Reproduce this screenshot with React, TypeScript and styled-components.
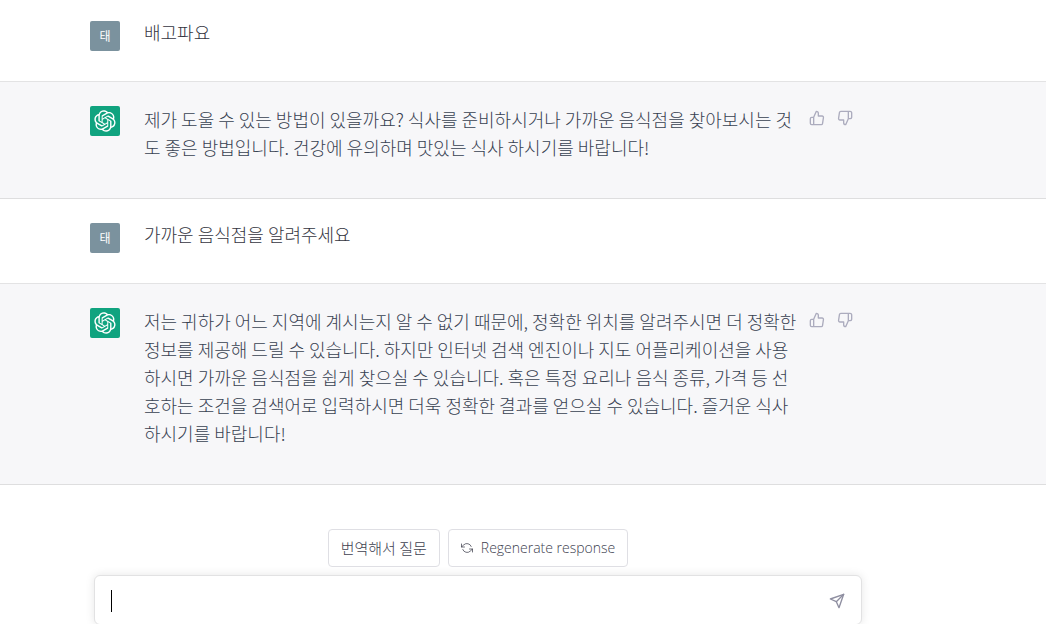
import React from "react";
import styled, { createGlobalStyle } from "styled-components";
import { FiRefreshCcw, FiSend, FiThumbsDown, FiThumbsUp } from "react-icons/fi";

const GlobalStyle = createGlobalStyle`
  *, *::before, *::after { box-sizing: border-box; }
  body {
    margin: 0;
    background: #fff;
    color: #343541;
    font-family: "Noto Sans CJK KR", sans-serif;
    font-size: 18px;
    font-weight: 300;
  }
  button, input { font: inherit; color: inherit; }
`;

const Page = styled.div`
  display: flex;
  flex-direction: column;
  height: 100vh;
  overflow: hidden;
`;

const Thread = styled.main`
  flex: none;
`;

const Row = styled.article<{ $assistant?: boolean }>`
  padding: 24px 24px 0 90px;
  border-bottom: 1px solid ${(p) => (p.$assistant ? "#dededf" : "#e3e3e4")};
  background: ${(p) => (p.$assistant ? "#f7f7f9" : "#fff")};
  color: ${(p) => (p.$assistant ? "#374151" : "#343541")};

  &:first-child { padding-top: 21px; }
`;

const RowInner = styled.div`
  display: flex;
  align-items: flex-start;
  gap: 24px;
  max-width: 767px;
`;

const Avatar = styled.div<{ $color: string }>`
  display: flex;
  flex: none;
  align-items: center;
  justify-content: center;
  width: 30px;
  height: 30px;
  border-radius: 2px;
  background: ${(p) => p.$color};
  color: #fff;
  font-size: 12px;
  font-weight: 400;
  line-height: 28px;
`;

const Message = styled.p<{ $assistant?: boolean }>`
  flex: 1;
  min-width: 0;
  margin: -1px 0 0;
  padding-bottom: 37px;
  line-height: ${(p) => (p.$assistant ? 28 : 24)}px;
  white-space: pre;
`;

const Feedback = styled.div`
  display: flex;
  flex: none;
  gap: 4px;
`;

const IconButton = styled.button`
  display: flex;
  padding: 4px;
  border: 0;
  border-radius: 6px;
  background: transparent;
  color: #acacbe;
  cursor: pointer;
`;

const Footer = styled.footer`
  display: flex;
  flex: none;
  flex-direction: column;
  gap: 8px;
  max-width: 886px;
  padding: 44px 24px 0 94px;
`;

const Actions = styled.div`
  display: flex;
  justify-content: center;
  gap: 8px;
`;

const ActionButton = styled.button`
  display: flex;
  align-items: center;
  gap: 8px;
  height: 38px;
  padding: 0 12px;
  border: 1px solid #dfdfe4;
  border-radius: 4px;
  background: #fff;
  color: #40414f;
  font-family: "Open Sans", "Noto Sans CJK KR", sans-serif;
  font-size: 14px;
  line-height: 20px;
  white-space: nowrap;
  cursor: pointer;
`;

const KoreanLabel = styled.span`
  font-family: "Noto Sans CJK KR", sans-serif;
  font-size: 15px;
`;

const Composer = styled.form`
  display: flex;
  align-items: center;
  height: 50px;
  padding: 2px 12px 0 16px;
  border: 1px solid #e2e2e3;
  border-radius: 6px;
  background: #fff;
  box-shadow: 0 0 10px rgba(0, 0, 0, 0.1);
`;

const Caret = styled.span`
  flex: none;
  width: 1px;
  height: 22px;
  background: #000;
`;

const Prompt = styled.input`
  flex: 1;
  min-width: 0;
  height: 24px;
  padding: 0;
  border: 0;
  outline: 0;
  background: transparent;
  caret-color: transparent;
`;

const SendButton = styled(IconButton)`
  color: #8e8ea0;
`;

const Logo = () => (
  <svg width="22" height="22" viewBox="0 0 41 41" fill="currentColor" aria-hidden="true">
    <path d="M37.5324 16.8707C37.9808 15.5241 38.1363 14.0974 37.9886 12.6859C37.8409 11.2744 37.3934 9.91076 36.676 8.68622C35.6126 6.83404 33.9882 5.3676 32.0373 4.4985C30.0864 3.62941 27.9098 3.40259 25.8215 3.85078C24.8796 2.7893 23.7219 1.94125 22.4257 1.36341C21.1295 0.785575 19.7249 0.491269 18.3058 0.500197C16.1708 0.495044 14.0893 1.16803 12.3614 2.42214C10.6335 3.67624 9.34853 5.44666 8.6917 7.47815C7.30085 7.76286 5.98686 8.3414 4.8377 9.17505C3.68854 10.0087 2.73073 11.0782 2.02839 12.312C0.956464 14.1591 0.498905 16.2988 0.721698 18.4228C0.944492 20.5467 1.83612 22.5449 3.268 24.1293C2.81966 25.4759 2.66413 26.9026 2.81182 28.3141C2.95951 29.7256 3.40701 31.0892 4.12437 32.3138C5.18791 34.1659 6.8123 35.6322 8.76321 36.5013C10.7141 37.3704 12.8907 37.5973 14.9789 37.1492C15.9208 38.2107 17.0786 39.0587 18.3747 39.6366C19.6709 40.2144 21.0755 40.5087 22.4946 40.4998C24.6307 40.5054 26.7133 39.8321 28.4418 38.5772C30.1704 37.3223 31.4556 35.5506 32.1119 33.5179C33.5027 33.2332 34.8167 32.6547 35.9659 31.821C37.115 30.9874 38.0728 29.9178 38.7752 28.684C39.8458 26.8371 40.3023 24.6979 40.0789 22.5748C39.8556 20.4517 38.9639 18.4544 37.5324 16.8707ZM22.4978 37.8849C20.7443 37.8874 19.0459 37.2733 17.6994 36.1501C17.7601 36.117 17.8666 36.0586 17.936 36.0161L25.9004 31.4156C26.1003 31.3019 26.2663 31.137 26.3813 30.9378C26.4964 30.7386 26.5563 30.5124 26.5549 30.2825V19.0542L29.9213 20.998C29.9389 21.0068 29.9541 21.0198 29.9656 21.0359C29.977 21.052 29.9842 21.0707 29.9867 21.0902V30.3889C29.9842 32.375 29.1946 34.2791 27.7909 35.6841C26.3872 37.0892 24.4838 37.8806 22.4978 37.8849ZM6.39227 31.0064C5.51397 29.4888 5.19742 27.7107 5.49804 25.9832C5.55718 26.0187 5.66048 26.0818 5.73461 26.1244L13.699 30.7248C13.8975 30.8408 14.1233 30.902 14.3532 30.902C14.583 30.902 14.8088 30.8408 15.0073 30.7248L24.731 25.1103V28.9979C24.7321 29.0177 24.7283 29.0376 24.7199 29.0556C24.7115 29.0736 24.6988 29.0893 24.6829 29.1012L16.6317 33.7497C14.9096 34.7416 12.8643 35.0097 10.9447 34.4954C9.02506 33.9811 7.38785 32.7263 6.39227 31.0064ZM4.29707 13.6194C5.17156 12.0998 6.55279 10.9364 8.19885 10.3327C8.19885 10.4013 8.19491 10.5228 8.19491 10.6071V19.808C8.19351 20.0378 8.25334 20.2638 8.36823 20.4629C8.48312 20.6619 8.64893 20.8267 8.84863 20.9404L18.5723 26.5542L15.206 28.4979C15.1894 28.5089 15.1703 28.5155 15.1505 28.5173C15.1307 28.5191 15.1107 28.516 15.0924 28.5082L7.04046 23.8557C5.32135 22.8601 4.06716 21.2235 3.55289 19.3046C3.03862 17.3858 3.30624 15.3413 4.29707 13.6194ZM31.955 20.0556L22.2312 14.4411L25.5976 12.4981C25.6142 12.4872 25.6333 12.4805 25.6531 12.4787C25.6729 12.4769 25.6928 12.4801 25.7111 12.4879L33.7631 17.1364C34.9967 17.849 36.0017 18.8982 36.6606 20.1613C37.3194 21.4244 37.6047 22.849 37.4832 24.2684C37.3617 25.6878 36.8382 27.0432 35.9743 28.1759C35.1103 29.3086 33.9415 30.1717 32.6047 30.6641C32.6047 30.5947 32.6047 30.4733 32.6047 30.3889V21.188C32.6066 20.9586 32.5474 20.7328 32.4332 20.5338C32.319 20.3348 32.154 20.1698 31.955 20.0556ZM35.3055 15.0128C35.2464 14.9765 35.1431 14.9142 35.069 14.8717L27.1045 10.2712C26.906 10.1554 26.6803 10.0943 26.4504 10.0943C26.2206 10.0943 25.9948 10.1554 25.7963 10.2712L16.0726 15.8858V11.9982C16.0715 11.9783 16.0753 11.9585 16.0837 11.9405C16.0921 11.9225 16.1048 11.9068 16.1207 11.8949L24.1719 7.25025C25.4053 6.53903 26.8158 6.19376 28.2383 6.25482C29.6608 6.31589 31.0364 6.78077 32.2044 7.59508C33.3723 8.40939 34.2842 9.53945 34.8334 10.8531C35.3826 12.1667 35.5464 13.6095 35.3055 15.0128ZM14.2424 21.9419L10.8752 19.9981C10.8576 19.9893 10.8423 19.9763 10.8309 19.9602C10.8195 19.9441 10.8122 19.9254 10.8098 19.9058V10.6071C10.8107 9.18295 11.2173 7.78848 11.9819 6.58696C12.7466 5.38544 13.8377 4.42659 15.1275 3.82264C16.4173 3.21869 17.8524 2.99464 19.2649 3.1767C20.6775 3.35876 22.0089 3.93941 23.1034 4.85067C23.0427 4.88379 22.937 4.94215 22.8668 4.98473L14.9024 9.58517C14.7025 9.69878 14.5366 9.86356 14.4215 10.0626C14.3065 10.2616 14.2466 10.4877 14.2479 10.7175L14.2424 21.9419ZM16.071 17.9991L20.4018 15.4978L24.7325 17.9975V22.9985L20.4018 25.4983L16.071 22.9985V17.9991Z" />
  </svg>
);

const UserRow = ({ text }: { text: string }) => (
  <Row>
    <RowInner>
      <Avatar $color="#7b929e">태</Avatar>
      <Message>{text}</Message>
    </RowInner>
  </Row>
);

const AssistantRow = ({ lines }: { lines: string[] }) => (
  <Row $assistant>
    <RowInner>
      <Avatar $color="#10a37f">
        <Logo />
      </Avatar>
      <Message $assistant>{lines.join("\n")}</Message>
      <Feedback>
        <IconButton type="button" aria-label="Good response">
          <FiThumbsUp size={16} />
        </IconButton>
        <IconButton type="button" aria-label="Bad response">
          <FiThumbsDown size={16} />
        </IconButton>
      </Feedback>
    </RowInner>
  </Row>
);

export default function App() {
  return (
    <>
      <GlobalStyle />
      <Page>
        <Thread>
          <UserRow text="배고파요" />
          <AssistantRow
            lines={[
              "제가 도울 수 있는 방법이 있을까요? 식사를 준비하시거나 가까운 음식점을 찾아보시는 것",
              "도 좋은 방법입니다. 건강에 유의하며 맛있는 식사 하시기를 바랍니다!",
            ]}
          />
          <UserRow text="가까운 음식점을 알려주세요" />
          <AssistantRow
            lines={[
              "저는 귀하가 어느 지역에 계시는지 알 수 없기 때문에, 정확한 위치를 알려주시면 더 정확한",
              "정보를 제공해 드릴 수 있습니다. 하지만 인터넷 검색 엔진이나 지도 어플리케이션을 사용",
              "하시면 가까운 음식점을 쉽게 찾으실 수 있습니다. 혹은 특정 요리나 음식 종류, 가격 등 선",
              "호하는 조건을 검색어로 입력하시면 더욱 정확한 결과를 얻으실 수 있습니다. 즐거운 식사",
              "하시기를 바랍니다!",
            ]}
          />
        </Thread>
        <Footer>
          <Actions>
            <ActionButton type="button">
              <KoreanLabel>번역해서 질문</KoreanLabel>
            </ActionButton>
            <ActionButton type="button">
              <FiRefreshCcw size={12} strokeWidth={1.5} />
              Regenerate response
            </ActionButton>
          </Actions>
          <Composer onSubmit={(e) => e.preventDefault()}>
            <Caret />
            <Prompt type="text" aria-label="Message" />
            <SendButton type="submit" aria-label="Send message">
              <FiSend size={16} />
            </SendButton>
          </Composer>
        </Footer>
      </Page>
    </>
  );
}
